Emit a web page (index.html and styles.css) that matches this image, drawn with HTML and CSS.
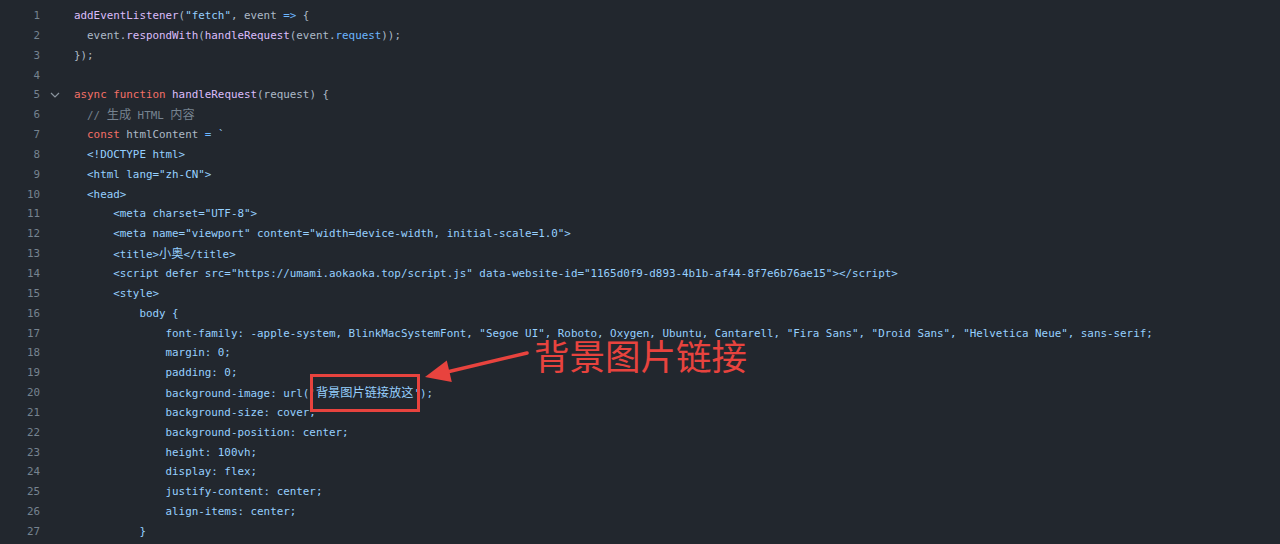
FILE: index.html
```html
<!DOCTYPE html>
<html lang="zh-CN">
<head>
<meta charset="UTF-8">
<title>code</title>
<link rel="stylesheet" href="styles.css">
</head>
<body>
<div class="editor">
  <div class="line"><span class="ln">1</span><span class="fold"></span><span class="code"><span class="fn">addEventListener</span>(<span class="str">"fetch"</span>, event <span class="op">=&gt;</span> {</span></div>
  <div class="line"><span class="ln">2</span><span class="fold"></span><span class="code">  event.<span class="fn">respondWith</span>(<span class="fn">handleRequest</span>(event.<span class="op">request</span>));</span></div>
  <div class="line"><span class="ln">3</span><span class="fold"></span><span class="code">});</span></div>
  <div class="line"><span class="ln">4</span><span class="fold"></span><span class="code"></span></div>
  <div class="line"><span class="ln">5</span><span class="fold"><svg width="10" height="6" viewBox="0 0 10 6"><path d="M1 1 L5 5 L9 1" fill="none" stroke="#8b949e" stroke-width="1.2"/></svg></span><span class="code"><span class="kw">async function</span> <span class="fn">handleRequest</span>(request) {</span></div>
  <div class="line"><span class="ln">6</span><span class="fold"></span><span class="code">  <span class="cm">// <span class="cjk">生成</span> HTML <span class="cjk">内容</span></span></span></div>
  <div class="line"><span class="ln">7</span><span class="fold"></span><span class="code">  <span class="kw">const</span> htmlContent <span class="op">=</span> <span class="str">`</span></span></div>
  <div class="line"><span class="ln">8</span><span class="fold"></span><span class="code str">  &lt;!DOCTYPE html&gt;</span></div>
  <div class="line"><span class="ln">9</span><span class="fold"></span><span class="code str">  &lt;html lang="zh-CN"&gt;</span></div>
  <div class="line"><span class="ln">10</span><span class="fold"></span><span class="code str">  &lt;head&gt;</span></div>
  <div class="line"><span class="ln">11</span><span class="fold"></span><span class="code str">      &lt;meta charset="UTF-8"&gt;</span></div>
  <div class="line"><span class="ln">12</span><span class="fold"></span><span class="code str">      &lt;meta name="viewport" content="width=device-width, initial-scale=1.0"&gt;</span></div>
  <div class="line"><span class="ln">13</span><span class="fold"></span><span class="code str">      &lt;title&gt;<span class="cjk">小奥</span>&lt;/title&gt;</span></div>
  <div class="line"><span class="ln">14</span><span class="fold"></span><span class="code str">      &lt;script defer src="https://umami.aokaoka.top/script.js" data-website-id="1165d0f9-d893-4b1b-af44-8f7e6b76ae15"&gt;&lt;/script&gt;</span></div>
  <div class="line"><span class="ln">15</span><span class="fold"></span><span class="code str">      &lt;style&gt;</span></div>
  <div class="line"><span class="ln">16</span><span class="fold"></span><span class="code str">          body {</span></div>
  <div class="line"><span class="ln">17</span><span class="fold"></span><span class="code str">              font-family: -apple-system, BlinkMacSystemFont, "Segoe UI", Roboto, Oxygen, Ubuntu, Cantarell, "Fira Sans", "Droid Sans", "Helvetica Neue", sans-serif;</span></div>
  <div class="line"><span class="ln">18</span><span class="fold"></span><span class="code str">              margin: 0;</span></div>
  <div class="line"><span class="ln">19</span><span class="fold"></span><span class="code str">              padding: 0;</span></div>
  <div class="line"><span class="ln">20</span><span class="fold"></span><span class="code str">              background-image: url('<span class="cjk">背景图片链接放这</span>');</span></div>
  <div class="line"><span class="ln">21</span><span class="fold"></span><span class="code str">              background-size: cover;</span></div>
  <div class="line"><span class="ln">22</span><span class="fold"></span><span class="code str">              background-position: center;</span></div>
  <div class="line"><span class="ln">23</span><span class="fold"></span><span class="code str">              height: 100vh;</span></div>
  <div class="line"><span class="ln">24</span><span class="fold"></span><span class="code str">              display: flex;</span></div>
  <div class="line"><span class="ln">25</span><span class="fold"></span><span class="code str">              justify-content: center;</span></div>
  <div class="line"><span class="ln">26</span><span class="fold"></span><span class="code str">              align-items: center;</span></div>
  <div class="line"><span class="ln">27</span><span class="fold"></span><span class="code str">          }</span></div>

  <div class="mark-box"></div>
  <svg class="mark-arrow" width="115" height="45" viewBox="0 0 115 45">
    <line x1="27" y1="27" x2="107" y2="8" stroke="#e8433e" stroke-width="3.5" stroke-linecap="round"/>
    <polygon points="5,32 26.8,15.6 31.8,37" fill="#e8433e"/>
  </svg>
  <div class="mark-label">背景图片链接</div>
</div>
</body>
</html>
```

FILE: styles.css
```css
html, body {
  margin: 0;
  padding: 0;
  background: #22272e;
  overflow: hidden;
}

.editor {
  position: relative;
  height: 544px;
  padding-top: 6px;
  box-sizing: border-box;
  font-family: "DejaVu Sans Mono", "Liberation Mono", monospace;
  font-size: 10.86px;
  color: #adbac7;
}

.line {
  display: grid;
  grid-template-columns: 40px 34px 1fr;
  height: 19.85px;
  line-height: 19.85px;
  white-space: pre;
}

.ln {
  text-align: right;
  color: #768390;
}

.fold {
  display: flex;
  align-items: center;
  padding-left: 10px;
}

.code {
  white-space: pre;
}

.fn { color: #dcbdfb; }
.kw { color: #f47067; }
.str { color: #96d0ff; }
.op { color: #6cb6ff; }
.cm { color: #768390; }

.cjk {
  font-family: "Noto Sans CJK SC", sans-serif;
  font-size: 12.2px;
}

.mark-box {
  position: absolute;
  left: 310px;
  top: 374px;
  width: 104px;
  height: 32px;
  border: 3px solid #e8433e;
}

.mark-arrow {
  position: absolute;
  left: 420px;
  top: 345px;
}

.mark-label {
  position: absolute;
  left: 534px;
  top: 337px;
  font-family: "Noto Sans CJK SC", sans-serif;
  font-weight: 400;
  font-size: 35.5px;
  line-height: 36px;
  color: #e8433e;
  white-space: nowrap;
}
```
